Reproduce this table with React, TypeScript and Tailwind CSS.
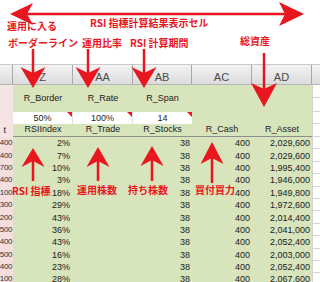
import React from 'react';

const RED = '#e8161e';

type DataRow = { y: string; z: string; ab: string; ac: string; ad: string };

const dataRows: DataRow[] = [
  { y: '400', z: '2%', ab: '38', ac: '400', ad: '2,029,600' },
  { y: '400', z: '7%', ab: '38', ac: '400', ad: '2,029,600' },
  { y: '700', z: '10%', ab: '38', ac: '400', ad: '1,995,400' },
  { y: '400', z: '3%', ab: '38', ac: '400', ad: '1,946,000' },
  { y: '100', z: '18%', ab: '38', ac: '400', ad: '1,949,800' },
  { y: '300', z: '29%', ab: '38', ac: '400', ad: '1,972,600' },
  { y: '200', z: '43%', ab: '38', ac: '400', ad: '2,014,400' },
  { y: '500', z: '36%', ab: '38', ac: '400', ad: '2,041,000' },
  { y: '400', z: '43%', ab: '38', ac: '400', ad: '2,052,400' },
  { y: '500', z: '16%', ab: '38', ac: '400', ad: '2,003,000' },
  { y: '400', z: '23%', ab: '38', ac: '400', ad: '2,052,400' },
  { y: '100', z: '28%', ab: '38', ac: '400', ad: '2,067,600' },
];

type ArrowProps = {
  x1: number;
  y1: number;
  x2: number;
  y2: number;
  len: number;
  half: number;
  notch?: number;
  w?: number;
};

// swept arrowhead with a notched back, like the drawing-tool arrows
function Arrow({ x1, y1, x2, y2, len, half, notch = 6, w = 2.5 }: ArrowProps) {
  const dx = x2 - x1;
  const dy = y2 - y1;
  const d = Math.hypot(dx, dy);
  const ux = dx / d;
  const uy = dy / d;
  const px = -uy;
  const py = ux;
  const bx = x2 - ux * len;
  const by = y2 - uy * len;
  const nx = x2 - ux * (len - notch);
  const ny = y2 - uy * (len - notch);
  const pts = [
    [x2, y2],
    [bx + px * half, by + py * half],
    [nx, ny],
    [bx - px * half, by - py * half],
  ]
    .map((p) => p.join(','))
    .join(' ');
  return (
    <g>
      <line x1={x1} y1={y1} x2={nx} y2={ny} stroke={RED} strokeWidth={w} />
      <polygon points={pts} fill={RED} />
    </g>
  );
}

function Note({ children, className }: { children: React.ReactNode; className: string }) {
  return (
    <span
      className={`absolute whitespace-nowrap font-['Noto_Sans_CJK_JP',sans-serif] text-[10px] font-bold leading-[12px] text-[#e8161e] ${className}`}
    >
      {children}
    </span>
  );
}

function Flag() {
  return (
    <span className="absolute right-0 top-0 h-0 w-0 border-l-[5px] border-t-[5px] border-l-transparent border-t-[#e8161e]" />
  );
}

export default function App() {
  return (
    <div className="relative h-[282px] w-[320px] overflow-hidden bg-white font-['Liberation_Sans',sans-serif] text-[9px] text-[#222]">
      {/* white band above the sheet */}
      <div className="h-[64px]" />

      {/* column headers */}
      <div className="flex h-[20px] border-t border-[#c9c9c9] bg-gradient-to-b from-[#f3f3f3] to-[#dcdcdc] text-[11px] leading-[12px] text-[#4a4a4a]">
        <div className="w-[13px] shrink-0 border-r border-[#a8a8a8]" />
        {['Z', 'AA', 'AB', 'AC', 'AD'].map((c, i) => (
          <div
            key={c}
            className={`flex shrink-0 items-end justify-center border-r border-[#a8a8a8] pb-[1px] ${i === 2 ? 'w-[59px]' : 'w-[60px]'}`}
          >
            {c}
          </div>
        ))}
        <div className="flex-1" />
      </div>

      {/* parameter names */}
      <div className="flex h-[28px] border-t border-[#b5b5b5]">
        <div className="w-[13px] shrink-0 bg-[#f5e4e4]" />
        <div className="flex w-[299px] shrink-0 items-center bg-[#d8e4bc]">
          <div className="w-[60px] text-center">R_Border</div>
          <div className="w-[60px] text-center">R_Rate</div>
          <div className="w-[59px] text-center">R_Span</div>
        </div>
        <div className="flex flex-1 flex-col border-l border-[#d4d4d4]">
          <div className="h-[13px] border-b border-[#d4d4d4]" />
          <div className="flex-1 border-b border-[#d4d4d4]" />
        </div>
      </div>

      {/* parameter values */}
      <div className="flex h-[12px]">
        <div className="w-[13px] shrink-0 bg-[#f5e4e4]" />
        <div className="flex w-[299px] shrink-0 bg-[#d8e4bc] leading-[12px]">
          <div className="relative w-[60px] border-r border-[#e2e2e2] bg-white text-center">
            50%
            <Flag />
          </div>
          <div className="relative w-[60px] border-r border-[#e2e2e2] bg-white text-center">
            100%
            <Flag />
          </div>
          <div className="relative w-[59px] bg-white text-center">
            14
            <Flag />
          </div>
        </div>
        <div className="flex-1 border-b border-l border-[#d4d4d4]" />
      </div>

      {/* result labels */}
      <div className="flex h-[13px]">
        <div className="flex w-[13px] shrink-0 items-center justify-end bg-[#f5e4e4] pr-[7px]">
          t
        </div>
        <div className="flex w-[299px] shrink-0 items-center border-b border-[#8e8e8e] bg-[#d8e4bc]">
          <div className="w-[60px] text-center">RSIIndex</div>
          <div className="w-[60px] text-center">R_Trade</div>
          <div className="w-[59px] text-center">R_Stocks</div>
          <div className="w-[60px] text-center">R_Cash</div>
          <div className="w-[60px] text-center">R_Asset</div>
        </div>
        <div className="flex-1 border-b border-l border-[#d4d4d4]" />
      </div>

      {/* results */}
      {dataRows.map((r, i) => (
        <div key={i} className="flex h-[12.4px] leading-[12px]">
          <div className="flex w-[13px] shrink-0 items-center justify-end bg-[#f4dede] pr-[1px] text-[8px] tracking-[-0.4px] text-[#333]">
            {r.y}
          </div>
          <div className="flex w-[299px] shrink-0 items-center bg-[#d8e4bc]">
            <div className="w-[60px] pr-[3px] text-right">{r.z}</div>
            <div className="w-[60px]" />
            <div className="w-[59px] pr-[2px] text-right">{r.ab}</div>
            <div className="w-[60px] pr-[2px] text-right">{r.ac}</div>
            <div className="w-[60px] pr-[2px] text-right">{r.ad}</div>
          </div>
          <div className="flex-1 border-b border-l border-[#d4d4d4]" />
        </div>
      ))}

      {/* red annotations over the sheet */}
      <div className="pointer-events-none absolute inset-0">
        <svg width={320} height={282} className="absolute left-0 top-0">
          <Arrow x1={157} y1={14} x2={10} y2={14} len={23} half={11} />
          <Arrow x1={157} y1={14} x2={304} y2={14} len={25} half={12} />
          <Arrow x1={33} y1={49} x2={33} y2={88} len={21} half={12.5} />
          <Arrow x1={88} y1={49} x2={88} y2={88} len={21} half={12.5} />
          <Arrow x1={144} y1={49} x2={144} y2={88} len={21} half={12.5} />
          <Arrow x1={264} y1={53} x2={264} y2={107} len={24} half={13} />
          <Arrow x1={33} y1={181} x2={33} y2={148} len={19} half={11.5} />
          <Arrow x1={98} y1={181} x2={98} y2={147} len={20} half={11.5} />
          <Arrow x1={152} y1={181} x2={152} y2={146} len={20} half={11.5} />
          <Arrow x1={212} y1={183} x2={212} y2={142} len={22} half={11.5} />
        </svg>

        <Note className="left-[7px] top-[20px]">運用に入る</Note>
        <Note className="left-[90px] top-[17px]">RSI 指標計算結果表示セル</Note>
        <Note className="left-[8px] top-[37px]">ボーダーライン</Note>
        <Note className="left-[82px] top-[37px]">運用比率</Note>
        <Note className="left-[130px] top-[37px]">RSI 計算期間</Note>
        <Note className="left-[240px] top-[35px]">総資産</Note>

        <Note className="left-[12px] top-[185px]">RSI 指標</Note>
        <Note className="left-[77px] top-[184px]">運用株数</Note>
        <Note className="left-[128px] top-[184px]">持ち株数</Note>
        <Note className="left-[195px] top-[184px]">買付買力</Note>
      </div>
    </div>
  );
}
